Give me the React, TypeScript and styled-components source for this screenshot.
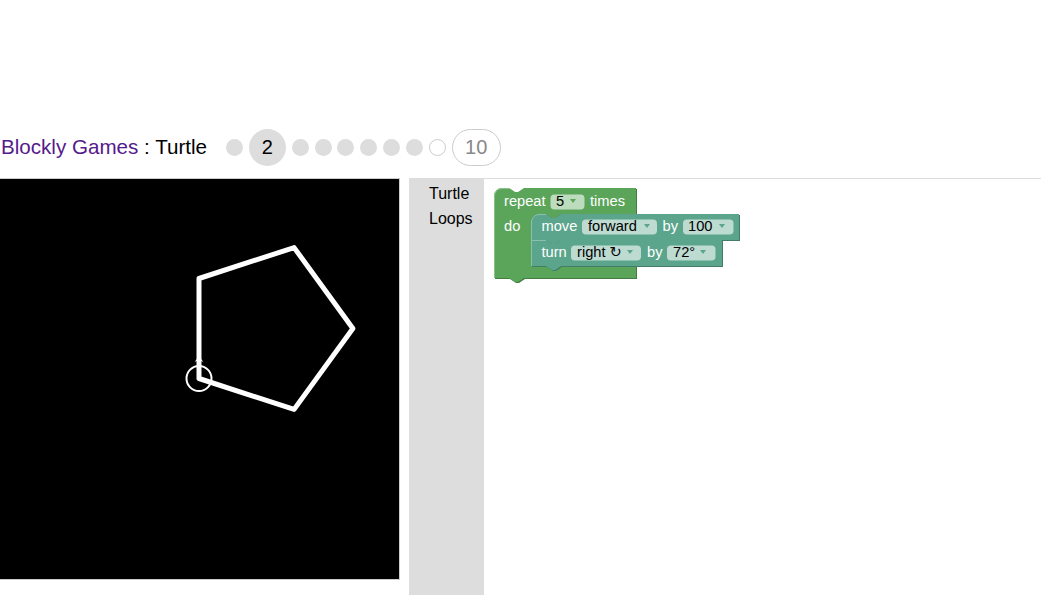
import React from 'react';
import styled, { createGlobalStyle } from 'styled-components';

const GlobalStyle = createGlobalStyle`
  html, body {
    margin: 0;
    padding: 0;
    background: #fff;
    overflow: hidden;
  }
  body {
    font-family: "Liberation Sans", Arial, sans-serif;
  }
`;

const Page = styled.div`
  width: 1041px;
  height: 595px;
  overflow: hidden;
`;

const Header = styled.div`
  display: flex;
  align-items: center;
  height: 38px;
  margin-top: 128px;
  padding-left: 1px;
`;

const Title = styled.h1`
  margin: 0;
  font-size: 20.6px;
  font-weight: normal;
  color: #000;
  white-space: nowrap;
`;

const HomeLink = styled.a`
  color: #551a8b;
  text-decoration: none;
`;

const LevelNav = styled.div`
  display: flex;
  align-items: center;
  gap: 5.85px;
  margin-left: 19px;
`;

const Dot = styled.span<{ $hollow?: boolean }>`
  box-sizing: border-box;
  width: 17px;
  height: 17px;
  border-radius: 50%;
  background: ${(p) => (p.$hollow ? '#fff' : '#ddd')};
  border: ${(p) => (p.$hollow ? '1px solid #ccc' : 'none')};
`;

const LevelBubble = styled.span<{ $current?: boolean }>`
  box-sizing: border-box;
  display: flex;
  align-items: center;
  justify-content: center;
  height: 37px;
  min-width: 37px;
  padding: ${(p) => (p.$current ? '0' : '0 12.5px')};
  border-radius: 19px;
  font-size: 20px;
  background: ${(p) => (p.$current ? '#ddd' : '#fff')};
  border: ${(p) => (p.$current ? 'none' : '1px solid #ccc')};
  color: ${(p) => (p.$current ? '#000' : '#888')};
`;

const Main = styled.div`
  display: flex;
  align-items: flex-start;
  margin-top: 12px;
`;

const Display = styled.div`
  width: 400px;
  height: 400px;
  margin-left: -2px;
  background: #000;
  border: 1px solid #ccc;
  flex-shrink: 0;

  svg {
    display: block;
  }
`;

const Workspace = styled.div`
  display: flex;
  flex: 1;
  height: 440px;
  margin-left: 9px;
  border-top: 1px solid #ddd;
  border-left: 1px solid #ddd;
`;

const Toolbox = styled.div`
  width: 74px;
  background: #ddd;
  padding-top: 2px;
  flex-shrink: 0;
`;

const Category = styled.div`
  height: 25px;
  line-height: 25px;
  padding-left: 19px;
  font-size: 16px;
  color: #000;
`;

const Canvas = styled.svg`
  flex: 1;
  height: 100%;
  display: block;
  font-family: "Liberation Sans", "DejaVu Sans", Arial, sans-serif;
  font-size: 11pt;
`;

const Label = styled.text`
  fill: #fff;
`;

const FieldText = styled.text`
  fill: #000;
`;

const LOOP = '#5ba55b';
const LOOP_DARK = '#437d43';
const LOOP_LIGHT = '#8cc08c';
const TURTLE = '#5ba58c';
const TURTLE_DARK = '#437d68';
const TURTLE_LIGHT = '#8cc0ae';

const Dropdown = ({ x, w, y, text, tx, ax, colour, base }: {
  x: number; w: number; y: number; text: string; tx: number; ax: number; colour: string; base: number;
}) => (
  <g>
    <rect x={x} y={y} width={w} height={15} rx={4} ry={4} fill="#fff" fillOpacity={0.6} />
    <FieldText x={tx} y={base}>{text}</FieldText>
    <polygon points={`${ax - 3},${base - 7} ${ax + 3},${base - 7} ${ax},${base - 3}`} fill={colour} />
  </g>
);

const statementPath = (w: number, rounded: boolean) =>
  (rounded ? 'M0,8 a8,8 0 0,1 8,-8 ' : 'M0,0 ') +
  `H15 l6,4 3,0 6,-4 H${w} V26 H30 l-6,4 -3,0 -6,-4 H0 Z`;

const repeatPath =
  'M0,8 a8,8 0 0,1 8,-8 H15 l6,4 3,0 6,-4 H142 V26 H67 l-6,4 -3,0 -6,-4 H45 a8,8 0 0,0 -8,8 V70 a8,8 0 0,0 8,8 H142 V90 H30 l-6,4 -3,0 -6,-4 H0 Z';

const Shape = ({ d, fill, dark, light, edge }: {
  d: string; fill: string; dark: string; light: string; edge: string;
}) => (
  <>
    <path d={d} fill={dark} transform="translate(1,1)" />
    <path d={d} fill={fill} />
    <path d={edge} fill="none" stroke={light} strokeWidth={1} />
  </>
);

const MoveBlock = () => (
  <g transform="translate(37,26)">
    <Shape
      d={statementPath(208, true)}
      fill={TURTLE}
      dark={TURTLE_DARK}
      light={TURTLE_LIGHT}
      edge="M0.5,26 V8 a7.5,7.5 0 0,1 7.5,-7.5 H15"
    />
    <Label x={10.5} y={17}>move</Label>
    <Dropdown x={51} w={75} y={5.5} text="forward" tx={57} ax={116} colour={TURTLE} base={17} />
    <Label x={131.5} y={17}>by</Label>
    <Dropdown x={152} w={50.5} y={5.5} text="100" tx={157} ax={191} colour={TURTLE} base={17} />
  </g>
);

const TurnBlock = () => (
  <g transform="translate(37,52)">
    <Shape
      d={statementPath(191, false)}
      fill={TURTLE}
      dark={TURTLE_DARK}
      light={TURTLE_LIGHT}
      edge="M0.5,26 V0.5 H15"
    />
    <Label x={10.5} y={17}>turn</Label>
    <Dropdown x={40} w={70} y={5.5} text="right ↻" tx={46} ax={99} colour={TURTLE} base={17} />
    <Label x={116} y={17}>by</Label>
    <Dropdown x={136} w={48.5} y={5.5} text="72°" tx={142} ax={172} colour={TURTLE} base={17} />
  </g>
);

const RepeatBlock = () => (
  <g transform="translate(10,9)">
    <Shape
      d={repeatPath}
      fill={LOOP}
      dark={LOOP_DARK}
      light={LOOP_LIGHT}
      edge="M0.5,90 V8 a7.5,7.5 0 0,1 7.5,-7.5 H15"
    />
    <Label x={10} y={18}>repeat</Label>
    <Dropdown x={56.5} w={34} y={6.5} text="5" tx={62} ax={79} colour={LOOP} base={18} />
    <Label x={96} y={18}>times</Label>
    <Label x={10} y={43}>do</Label>
    <MoveBlock />
    <TurnBlock />
  </g>
);

// turtle sits at the start point, heading up, after drawing the pentagon
const sx = 200;
const sy = 199.5;
const side = 100;

const pentagon = () => {
  const pts: [number, number][] = [[sx, sy]];
  let x = sx;
  let y = sy;
  let heading = 0;
  for (let i = 0; i < 5; i++) {
    const r = (heading * Math.PI) / 180;
    x += side * Math.sin(r);
    y -= side * Math.cos(r);
    pts.push([x, y]);
    heading += 72;
  }
  return pts.map(([px, py], i) => `${i ? 'L' : 'M'}${px.toFixed(2)},${py.toFixed(2)}`).join(' ');
};

const turtleHead = () => {
  const radius = 12.5;
  const at = (rad: number, dist: number) => [sx + dist * Math.sin(rad), sy - dist * Math.cos(rad)];
  const [tx, ty] = at(0, radius + 10);
  const [lx, ly] = at(-0.3, radius + 4);
  const [rx, ry] = at(0.3, radius + 4);
  const [lcx, lcy] = at(-0.15, radius + 6);
  const [rcx, rcy] = at(0.15, radius + 6);
  return `M${tx},${ty} L${lx},${ly} C${lcx},${lcy} ${rcx},${rcy} ${rx},${ry} Z`;
};

export default function App() {
  return (
    <Page>
      <GlobalStyle />
      <Header>
        <Title>
          <HomeLink href="#">Blockly Games</HomeLink> : Turtle
        </Title>
        <LevelNav>
          <Dot />
          <LevelBubble $current>2</LevelBubble>
          {[3, 4, 5, 6, 7, 8].map((n) => (
            <Dot key={n} />
          ))}
          <Dot $hollow />
          <LevelBubble>10</LevelBubble>
        </LevelNav>
      </Header>
      <Main>
        <Display>
          <svg width="400" height="400" viewBox="0 0 400 400">
            <path d={pentagon()} fill="none" stroke="#fff" strokeWidth={5} strokeLinejoin="round" strokeLinecap="round" />
            <circle cx={sx} cy={sy} r={12.5} fill="none" stroke="#fff" strokeWidth={2} />
            <path d={turtleHead()} fill="#fff" />
          </svg>
        </Display>
        <Workspace>
          <Toolbox>
            <Category>Turtle</Category>
            <Category>Loops</Category>
          </Toolbox>
          <Canvas>
            <RepeatBlock />
          </Canvas>
        </Workspace>
      </Main>
    </Page>
  );
}
